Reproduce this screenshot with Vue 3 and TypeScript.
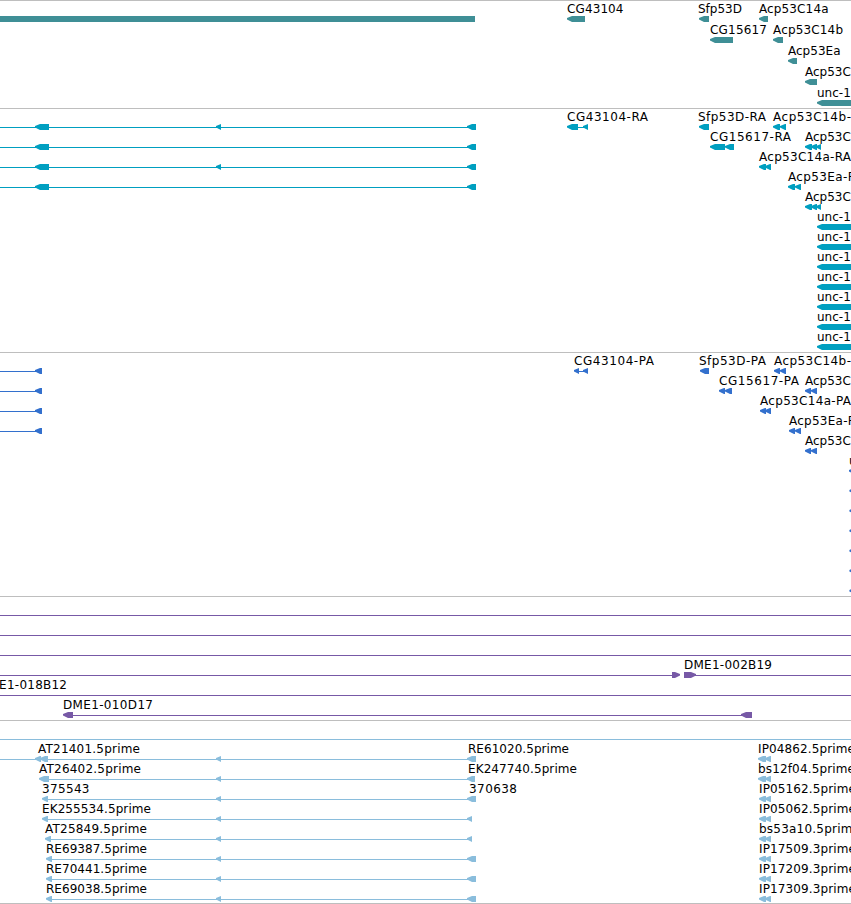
<script setup lang="ts">
interface Label {
  row: number
  x: number
  text: string
  width?: number
}
interface Exon {
  row: number
  start: number
  end: number
  forward?: boolean
}
interface Line {
  row: number
  from: number
  to: number
}
interface Track {
  id: string
  height: number
  color: string
  firstRow: number
  pitch: number
  labels: Label[]
  exons: Exon[]
  lines: Line[]
  bars?: Line[]
}

const VIEW_WIDTH = 851

const ex = (row: number, ...spans: [number, number][]): Exon[] =>
  spans.map(([start, end]) => ({ row, start, end }))
const range = (from: number, to: number): number[] =>
  Array.from({ length: to - from + 1 }, (_, i) => from + i)

const genes: Track = {
  id: 'genes',
  height: 108,
  color: '#3f8f96',
  firstRow: 15,
  pitch: 21,
  bars: [{ row: 0, from: 0, to: 475 }],
  lines: [],
  labels: [
    { row: 0, x: 567, text: 'CG43104', width: 56.5 },
    { row: 0, x: 698, text: 'Sfp53D', width: 44 },
    { row: 0, x: 759, text: 'Acp53C14a', width: 69.5 },
    { row: 1, x: 710, text: 'CG15617', width: 57 },
    { row: 1, x: 773, text: 'Acp53C14b', width: 70 },
    { row: 2, x: 788, text: 'Acp53Ea', width: 52.5 },
    { row: 3, x: 805, text: 'Acp53C' },
    { row: 4, x: 817, text: 'unc-1' },
  ],
  exons: [
    ...ex(0, [567, 585], [699, 709], [759, 768]),
    ...ex(1, [710, 733], [773, 783]),
    ...ex(2, [788, 797]),
    ...ex(3, [805, 817]),
    ...ex(4, [817, 860]),
  ],
}

const transcripts: Track = {
  id: 'transcripts',
  height: 244,
  color: '#009fc0',
  firstRow: 15,
  pitch: 20,
  lines: [
    ...range(0, 3).map((row) => ({ row, from: 0, to: 470 })),
    { row: 0, from: 576, to: 585 },
  ],
  labels: [
    { row: 0, x: 567, text: 'CG43104-RA', width: 81 },
    { row: 0, x: 698, text: 'Sfp53D-RA', width: 68 },
    { row: 0, x: 773, text: 'Acp53C14b-', width: 78 },
    { row: 1, x: 710, text: 'CG15617-RA', width: 81 },
    { row: 1, x: 805, text: 'Acp53C' },
    { row: 2, x: 759, text: 'Acp53C14a-RA', width: 92 },
    { row: 3, x: 788, text: 'Acp53Ea-R', width: 68 },
    { row: 4, x: 805, text: 'Acp53C' },
    ...range(5, 11).map((row) => ({ row, x: 817, text: 'unc-1' })),
  ],
  exons: [
    ...range(0, 3).flatMap((row) => ex(row, [35, 49], [467, 476])),
    ...ex(0, [216, 221], [567, 578], [583, 588], [699, 709], [773, 780], [780, 786]),
    ...ex(1, [710, 725], [725, 734], [805, 812], [811, 817], [816, 821]),
    ...ex(2, [216, 221], [759, 766], [765, 771]),
    ...ex(3, [788, 795], [795, 801]),
    ...ex(4, [805, 812], [811, 817], [816, 821]),
    ...range(5, 11).flatMap((row) => ex(row, [817, 860])),
  ],
}

const proteins: Track = {
  id: 'proteins',
  height: 244,
  color: '#3370cd',
  firstRow: 15,
  pitch: 20,
  lines: [
    ...range(0, 3).map((row) => ({ row, from: 0, to: 38 })),
    { row: 0, from: 577, to: 585 },
  ],
  labels: [
    { row: 0, x: 574, text: 'CG43104-PA', width: 80 },
    { row: 0, x: 699, text: 'Sfp53D-PA', width: 67 },
    { row: 0, x: 774, text: 'Acp53C14b-', width: 77 },
    { row: 1, x: 719, text: 'CG15617-PA', width: 80 },
    { row: 1, x: 805, text: 'Acp53C' },
    { row: 2, x: 760, text: 'Acp53C14a-PA', width: 91 },
    { row: 3, x: 789, text: 'Acp53Ea-P', width: 66 },
    { row: 4, x: 805, text: 'Acp53C' },
    { row: 5, x: 849, text: 'u' },
  ],
  exons: [
    ...range(0, 3).flatMap((row) => ex(row, [35, 42])),
    ...ex(0, [574, 579], [583, 588], [700, 709], [774, 780], [780, 786]),
    ...ex(1, [719, 725], [725, 732], [805, 811], [811, 817]),
    ...ex(2, [760, 766], [765, 771]),
    ...ex(3, [789, 795], [795, 801]),
    ...ex(4, [805, 811], [811, 817]),
    ...range(5, 11).flatMap((row) => ex(row, [row === 5 ? 849 : 849.4, 860])),
  ],
}

const clones: Track = {
  id: 'clones',
  height: 124,
  color: '#7759a6',
  firstRow: 15,
  pitch: 20,
  lines: [
    ...[0, 1, 2, 4].map((row) => ({ row, from: 0, to: VIEW_WIDTH })),
    { row: 3, from: 0, to: 674 },
    { row: 3, from: 690, to: VIEW_WIDTH },
    { row: 5, from: 68, to: 746 },
  ],
  labels: [
    { row: 3, x: 684, text: 'DME1-002B19', width: 88 },
    { row: 4, x: -21, text: 'DME1-018B12', width: 88 },
    { row: 5, x: 63, text: 'DME1-010D17', width: 90 },
  ],
  exons: [
    { row: 3, start: 672, end: 680, forward: true },
    { row: 3, start: 684, end: 696, forward: true },
    ...ex(5, [63, 73], [741, 752]),
  ],
}

const estNames: [number, string, number][] = [
  [38, 'AT21401.5prime', 102],
  [39, 'AT26402.5prime', 102],
  [42, '375543', 47.5],
  [42, 'EK255534.5prime', 109],
  [45, 'AT25849.5prime', 102],
  [46, 'RE69387.5prime', 101],
  [46, 'RE70441.5prime', 101],
  [46, 'RE69038.5prime', 101],
]
const readNames = [
  'IP04862.5prime', 'bs12f04.5prime', 'IP05162.5prime', 'IP05062.5prime',
  'bs53a10.5prime', 'IP17509.3prime', 'IP17209.3prime', 'IP17309.3prime',
]
const estStarts = [38, 39, 42, 42, 45, 46, 46, 46]
const estEnds = [476, 475, 476, 472, 472, 476, 476, 476]

const ests: Track = {
  id: 'ests',
  height: 183,
  color: '#8abddc',
  firstRow: 35,
  pitch: 20,
  lines: [
    { row: -1, from: 0, to: VIEW_WIDTH },
    ...estStarts.map((x, row) => ({ row, from: row === 0 ? 0 : x + 3, to: 470 })),
  ],
  labels: [
    ...estNames.map(([x, text, width], row) => ({ row, x, text, width })),
    { row: 0, x: 468, text: 'RE61020.5prime', width: 101 },
    { row: 1, x: 468, text: 'EK247740.5prime', width: 109 },
    { row: 2, x: 469, text: '370638', width: 48 },
    ...readNames.map((text, row) => ({
      row,
      x: row < 2 ? 758 : 759,
      text,
      width: row === 4 ? 101 : 97,
    })),
  ],
  exons: [
    ...ex(0, [35, 41], [40, 48]),
    ...ex(1, [39, 49]),
    ...estStarts.flatMap((x, row) => (row < 2 ? [] : ex(row, [x, x + 6]))),
    ...estEnds.flatMap((end, row) => ex(row, [216, 221], [467, end])),
    ...readNames.flatMap((_, row) => ex(row, [row < 2 ? 758 : 759, 766], [765, 771])),
  ],
}

const tracks: Track[] = [genes, transcripts, proteins, clones, ests]

const rowTop = (track: Track, row: number): number => track.firstRow + row * track.pitch

// Pointed glyph: the head tapers over at most five pixels.
function arrow(track: Track, e: Exon): string {
  const y = rowTop(track, e.row)
  const dir = e.forward ? -1 : 1
  const tip = e.forward ? e.end : e.start
  const tail = e.forward ? e.start : e.end
  const head = Math.min(5, e.end - e.start)
  const neck = tip + dir * head
  const mid = tip + dir * head * 0.5
  return [
    [tip, y + 2],
    [mid, y + 1],
    [neck, y],
    [tail, y],
    [tail, y + 6],
    [neck, y + 6],
    [mid, y + 4.8],
    [tip, y + 3.5],
  ]
    .map((p) => p.join(','))
    .join(' ')
}
</script>

<template>
  <main class="browser">
    <section v-for="t in tracks" :key="t.id" class="track">
      <svg class="canvas" :width="VIEW_WIDTH" :height="t.height - 1" :fill="t.color">
        <rect
          v-for="(l, i) in t.lines"
          :key="'l' + i"
          :x="l.from"
          :y="rowTop(t, l.row) + 3"
          :width="l.to - l.from"
          height="1"
        />
        <rect
          v-for="(b, i) in t.bars ?? []"
          :key="'b' + i"
          :x="b.from"
          :y="rowTop(t, b.row)"
          :width="b.to - b.from"
          height="6"
        />
        <polygon v-for="(e, i) in t.exons" :key="'e' + i" :points="arrow(t, e)" />
        <text
          v-for="(n, i) in t.labels"
          :key="'t' + i"
          class="label"
          :x="n.x"
          :y="rowTop(t, n.row) - 3"
          :textLength="n.width"
        >{{ n.text }}</text>
      </svg>
    </section>
  </main>
</template>

<style>
body {
  background: #fff;
}
</style>

<style scoped>
.browser {
  width: 851px;
  height: 904px;
  box-sizing: border-box;
  overflow: hidden;
  background: #fff;
  border-bottom: 1px solid #bebebe;
}
.track {
  border-top: 1px solid #bebebe;
}
.canvas {
  display: block;
  overflow: hidden;
}
.label {
  font-family: 'DejaVu Sans', sans-serif;
  font-size: 12px;
  fill: #000;
}
</style>
